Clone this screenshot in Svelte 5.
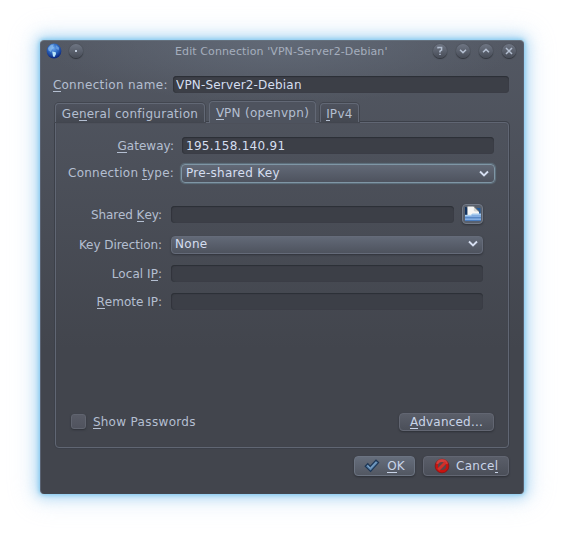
<script>
  let name = $state('VPN-Server2-Debian');
  let gateway = $state('195.158.140.91');
  let sharedKey = $state('');
  let localIp = $state('');
  let remoteIp = $state('');
  let showPasswords = $state(false);
</script>

{#snippet mnemonic(before, key, after)}<span class="txt">{before}<u>{key}</u>{after}</span>{/snippet}

{#snippet chevron()}
  <svg class="chevron" width="10" height="8" viewBox="0 0 10 8"><path d="M1 1.5 5 5.5 9 1.5" fill="none" stroke="#d5def0" stroke-width="1.9" /></svg>
{/snippet}

<div class="desktop">
  <div class="dialog">
    <header>
      <svg class="globe" width="16" height="16" viewBox="0 0 16 16">
        <defs>
          <radialGradient id="sea" cx="45%" cy="32%" r="65%">
            <stop offset="0" stop-color="#6ea9ee" />
            <stop offset=".55" stop-color="#2a64be" />
            <stop offset="1" stop-color="#0c2980" />
          </radialGradient>
        </defs>
        <circle cx="8" cy="8" r="7.4" fill="url(#sea)" />
        <path d="M2 5 5 1.8 8 1.4 7 3.2 8 4.5 5.8 6.6 5 9 2.5 7.5Z" fill="#9bcbf5" opacity=".6" />
        <path d="M6.2 8.6 9.8 9.2 10 11 8.5 14 7 13.6Z" fill="#bce6fa" />
        <path d="M10 2.3 13.2 4.8 12.5 7.5 10.4 5.4Z" fill="#86b9ee" opacity=".6" />
      </svg>
      <span class="round dot"></span>
      <h1>Edit Connection 'VPN-Server2-Debian'</h1>
      <div class="controls">
        <span class="round"><svg width="14" height="14" viewBox="0 0 14 14"><path d="M5 4.6V3.5H8.6V6L7 7.2V8.6M7 9.7V11" /></svg></span>
        <span class="round"><svg width="14" height="14" viewBox="0 0 14 14"><path d="M4 5.8 7 8.6 10 5.8" /></svg></span>
        <span class="round"><svg width="14" height="14" viewBox="0 0 14 14"><path d="M4 8.2 7 5.4 10 8.2" /></svg></span>
        <span class="round"><svg width="14" height="14" viewBox="0 0 14 14"><path d="M4 4 10 10M10 4 4 10" /></svg></span>
      </div>
    </header>

    <label class="name">
      {@render mnemonic('', 'C', 'onnection name:')}
      <input class="field" bind:value={name} />
    </label>

    <nav>
      <button class="tab general">{@render mnemonic('Ge', 'n', 'eral configuration')}</button>
      <button class="tab active">{@render mnemonic('', 'V', 'PN (openvpn)')}</button>
      <button class="tab ip">{@render mnemonic('', 'I', 'Pv4')}</button>
    </nav>

    <section class="panel">
      <div class="row outer gateway">
        <span class="label">{@render mnemonic('', 'G', 'ateway:')}</span>
        <input class="field" bind:value={gateway} />
      </div>
      <div class="row outer type">
        <span class="label">{@render mnemonic('Connection ', 't', 'ype:')}</span>
        <button class="combo focus"><span>Pre-shared Key</span>{@render chevron()}</button>
      </div>
      <div class="row shared">
        <span class="label">{@render mnemonic('Shared ', 'K', 'ey:')}</span>
        <input class="field" bind:value={sharedKey} />
        <button class="browse" aria-label="Browse">
          <svg width="16" height="16" viewBox="0 0 16 16">
            <path d="M0 1H1.5L2.5 3V9H0Z" fill="#12325e" />
            <path d="M10 2H15.5V9H10Z" fill="#245c9c" />
            <path d="M2.5 .5H9L14 5.5V10H2.5Z" fill="#f6f6f4" />
            <path d="M9 .5 14 5.5H10.5L8.8 5Z" fill="#d5d6d2" />
            <path d="M9 .5 14.2 5.7" fill="none" stroke="#4a4d50" stroke-width=".9" />
            <path d="M0 9H6L7.5 7.8H16V15H0Z" fill="#84aee2" />
            <path d="M0 9.3H6L7.5 8.2H16" fill="none" stroke="#b5d7f1" />
            <path d="M0 11.8H16M0 14.6H16" stroke="#3d70b4" stroke-width=".9" />
          </svg>
        </button>
      </div>
      <div class="row direction">
        <span class="label"><span class="txt">Key Direction:</span></span>
        <button class="combo"><span>None</span>{@render chevron()}</button>
      </div>
      <div class="row local">
        <span class="label">{@render mnemonic('Local I', 'P', ':')}</span>
        <input class="field" bind:value={localIp} />
      </div>
      <div class="row remote">
        <span class="label">{@render mnemonic('', 'R', 'emote IP:')}</span>
        <input class="field" bind:value={remoteIp} />
      </div>
      <div class="bottom">
        <label class="check">
          <input type="checkbox" bind:checked={showPasswords} />
          {@render mnemonic('', 'S', 'how Passwords')}
        </label>
        <button class="btn advanced">{@render mnemonic('', 'A', 'dvanced...')}</button>
      </div>
    </section>

    <footer>
      <button class="btn ok">
        <svg width="16" height="16" viewBox="0 0 16 16"><path d="M1.2 8.2 3.8 5.7 6.2 8.3 12 2.2 14.6 4.6 6.6 13.5Z" fill="#5c86b0" stroke="#1d3655" stroke-width="1.2" /><path d="M3.5 7.5 6.4 10.4 12.4 4" fill="none" stroke="#80a5c8" /></svg>
        {@render mnemonic('', 'O', 'K')}
      </button>
      <button class="btn cancel">
        <svg width="16" height="16" viewBox="0 0 16 16"><circle cx="8" cy="8" r="6.9" fill="#c8130f" stroke="#7b1111" stroke-width=".6" /><path d="M2 5.5A6.3 6.3 0 0 1 14 5.5Q8 8 2 5.5" fill="#e26a65" opacity=".5" /><circle cx="8" cy="8" r="4.1" fill="#5c4549" /><path d="M4.3 11.7 11.7 4.3" stroke="#d0302a" stroke-width="3" /></svg>
        {@render mnemonic('Cance', 'l', '')}
      </button>
    </footer>
  </div>
</div>

<style>
  :global(body) { background: #fff; }
  * { box-sizing: border-box; }
  .desktop { width: 564px; height: 534px; padding: 40px; overflow: hidden; }
  .dialog {
    display: flex; flex-direction: column;
    width: 484px; height: 454px;
    border: 1px solid #596272; border-top-color: #65717e; border-bottom-color: #424750; border-radius: 4px;
    background:
      radial-gradient(ellipse 240px 62px at 50% 0, rgba(102, 111, 125, .75), rgba(102, 111, 125, 0)),
      linear-gradient(#535863, #42454d 68%, #42454d);
    box-shadow: 0 0 4px 1px rgba(90, 184, 232, .65), 0 0 13px 4px rgba(130, 197, 240, .55), 0 0 26px 7px rgba(180, 210, 240, .3);
    color: #b4bfd1;
    font: 12px/17px "DejaVu Sans", sans-serif;
  }
  button, input { margin: 0; padding: 0; border: 0; font: inherit; color: inherit; outline: 0; }
  svg { display: block; flex: none; }
  .txt { display: block; line-height: 19px; white-space: pre; letter-spacing: .28px; }
  u { text-decoration: none; box-shadow: 0 1px 0 #b4bfd1; display: inline-block; height: 15px; line-height: 19px; letter-spacing: 0; vertical-align: baseline; }

  header { display: flex; align-items: center; height: 20px; padding: 0 6px 0 5px; flex: none; }
  .round {
    display: grid; flex: none; place-items: center; width: 14px; height: 14px; border-radius: 50%;
    background: linear-gradient(#6e7583, #474c57); box-shadow: 0 1px 1px #30343b, 0 0 1px #343942;
  }
  .round path { fill: none; stroke: #b4bfd1; stroke-width: 1.5; }
  .dot { margin-left: 7px; }
  .dot::after { content: ''; width: 1.5px; height: 1.5px; background: #c0cbdc; }
  h1 { flex: 1; margin: 2px 0 0 92px; text-align: left; font: 11px/16px "DejaVu Sans", sans-serif; letter-spacing: .1px; color: #a5aebd; white-space: nowrap; }
  .controls { display: flex; gap: 9px; margin-right: 1px; }

  .field {
    flex: 1; min-width: 0; height: 17px; padding: 1px 4px 0; border-radius: 4px; color: #d5def0;
    background: #3c3f47; box-shadow: inset 0 1px 1px #2c2f36, inset 1px 0 1px #33363d; letter-spacing: .28px;
  }
  .name { display: flex; flex: none; gap: 4px; height: 17px; margin: 15px 14px 0 12px; }
  .name .txt { width: 116px; letter-spacing: .34px; }
  .name .field { padding-left: 3px; letter-spacing: .17px; }

  nav { display: flex; align-items: flex-end; flex: none; height: 22px; margin: 8px 14px 0; z-index: 1; }
  .tab {
    display: flex; align-items: flex-start; justify-content: center;
    height: 19px; padding: 1px 0 0; margin-bottom: 1px; border: 1px solid #626875; border-bottom: 0; border-radius: 4px 4px 0 0;
    background: linear-gradient(#4e525d, #444851); box-shadow: 0 0 0 1px #42464f; color: #b4bfd1;
  }
  .general { width: 150px; }
  .ip { width: 39px; margin-left: 4px; }
  .active { width: 107px; height: 22px; margin: 0 0 0 4px; padding-top: 2px; background: #4e535e; box-shadow: 0 -1px 0 #414650; }

  .panel {
    display: flex; flex-direction: column; flex: none; height: 326px; margin: -1px 14px 0; padding: 14px 14px 0 0;
    border: 1px solid #606673; border-radius: 0 4px 4px 4px; box-shadow: 0 0 0 1px #3c4049, inset 0 0 1px #3c4049;
  }
  .row { display: flex; flex: none; height: 17px; padding-right: 11px; }
  .label { width: 106px; margin-right: 9px; text-align: right; }
  .outer .label { width: 118px; margin-right: 8px; }
  .row.outer { padding-right: 0; }
  .gateway .txt { letter-spacing: .05px; }
  .type { height: 19px; margin-top: 10px; }
  .row.type { margin-right: -1px; }
  .type .label { margin-right: 7px; }
  .type .txt { letter-spacing: .22px; }
  .shared { height: 19px; margin-top: 22px; }
  .shared .field, .shared .label { margin-top: 1px; }
  .shared .txt { letter-spacing: -.05px; }
  .direction { height: 18px; margin-top: 12px; }
  .direction .txt { letter-spacing: -.05px; }
  .local { margin-top: 11px; }
  .local .txt { letter-spacing: .05px; }
  .remote { margin-top: 11px; }
  .remote .txt { letter-spacing: 0; }
  .combo {
    display: flex; flex: 1; align-items: center; justify-content: space-between; padding: 0 5px 0 4px; border: 1px solid #656b79; border-radius: 4px;
    background: linear-gradient(#626977, #4e535e); box-shadow: 0 1px 2px #30333a; color: #d5def0; letter-spacing: .28px; line-height: 15px;
  }
  .direction .combo { padding: 0 4px 2px 3px; }
  .focus { border-color: #7f96a5; box-shadow: 0 0 1px 1px #60727f; }
  .browse {
    display: grid; place-items: center; width: 21px; height: 20px; margin: -1px 0 0 8px; border: 1px solid #747b88; border-radius: 4px;
    background: #59606c; box-shadow: 0 1px 2px #30333a;
  }
  .bottom { display: flex; align-items: center; justify-content: space-between; margin-top: 102px; padding-left: 15px; height: 19px; flex: none; }
  .check { display: flex; align-items: center; gap: 7px; }
  .check .txt { padding-top: 2px; letter-spacing: .34px; }
  .check input {
    appearance: none; width: 15px; height: 15px; border: 1px solid #60646f; border-radius: 3px;
    background: linear-gradient(#585b66, #50535e); box-shadow: 0 1px 2px #2f3239;
  }
  .btn {
    display: flex; align-items: center; justify-content: center; border: 1px solid #626672; border-radius: 4px;
    background: linear-gradient(#5a5e69, #4b4f59); box-shadow: 0 1px 2px #2d3037; color: #c9d4e8;
  }
  .btn .txt { padding-top: 1px; }
  .btn u { box-shadow: 0 1px 0 #c9d4e8; }
  .advanced { width: 95px; height: 18px; }
  .advanced .txt { letter-spacing: .2px; }
  footer { display: flex; flex: none; justify-content: flex-end; gap: 8px; margin: 8px 14px 0; height: 20px; }
  .ok { width: 61px; gap: 7px; background: linear-gradient(#666e7c, #525762); border-color: #6c7482; }
  .cancel { width: 86px; gap: 6px; }
</style>
